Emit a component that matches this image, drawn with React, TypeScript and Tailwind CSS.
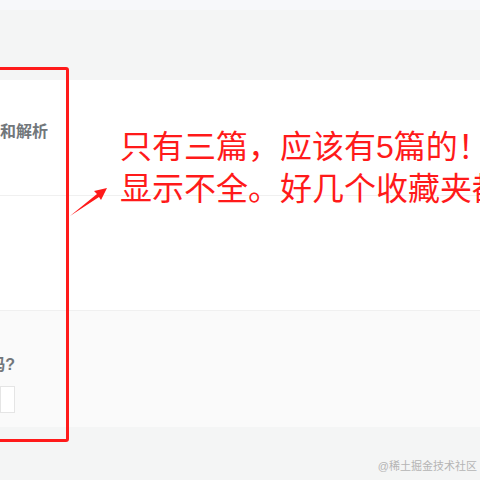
const CJK = "font-['Liberation_Sans','Noto_Sans_CJK_SC',sans-serif]";

const App = () => {
    return (
        <div className={`relative w-[480px] h-[480px] overflow-hidden bg-[#f4f5f5] ${CJK}`}>
            {/* top strip */}
            <div className="h-[10px] bg-[#f7f8fa]" />

            {/* collection panel (cropped) */}
            <div className="mt-[70px] w-full">
                <div className="bg-white">
                    <div className="h-[116px] flex items-center border-b border-[#f0f0f0]">
                        <div className="w-[48px] overflow-hidden flex justify-end -mt-[12px]">
                            <span className="whitespace-nowrap text-[16px] font-bold text-[#72777b]">
                                前端面试题汇总和解析
                            </span>
                        </div>
                    </div>
                    <div className="h-[115px] border-b border-[#f0f0f0]" />
                </div>
                <div className="bg-[#fafafa] h-[116px] pt-[42px]">
                    <div className="w-[30px] -ml-[15px] overflow-hidden flex justify-end">
                        <span className="whitespace-nowrap text-[16px] font-bold text-[#72777b]">
                            确定要删除吗?
                        </span>
                    </div>
                    <div className="mt-[9px] w-[15px] h-[27px] border border-[#e5e5e5] bg-white overflow-hidden flex items-center justify-end">
                        <span className="whitespace-nowrap text-[12px] text-[#aaa] pr-[14px]">确定</span>
                    </div>
                </div>
            </div>

            {/* red annotation box */}
            <div className="absolute left-[-20px] top-[67px] w-[89px] h-[375px] border-[3px] border-[#ff1a1a] rounded-[3px]" />

            {/* annotation arrow */}
            <svg className="absolute left-0 top-0" width="480" height="480" viewBox="0 0 480 480">
                <path d="M70 216 L97 194 L94 191 L107 188 L101 200 L99 197 Z" fill="#ff1a1a" />
            </svg>

            {/* annotation text */}
            <div className="absolute left-[120px] top-[126px] whitespace-nowrap text-[32px] leading-[42px] text-[#ff1a1a]">
                <div>只有三篇，应该有5篇的！</div>
                <div>显示不全。好几个收藏夹都</div>
            </div>

            {/* watermark */}
            <div className="absolute right-[3px] bottom-[6px] text-[11px] text-[#b4b4b4]">
                @稀土掘金技术社区
            </div>
        </div>
    );
};

export default App;
